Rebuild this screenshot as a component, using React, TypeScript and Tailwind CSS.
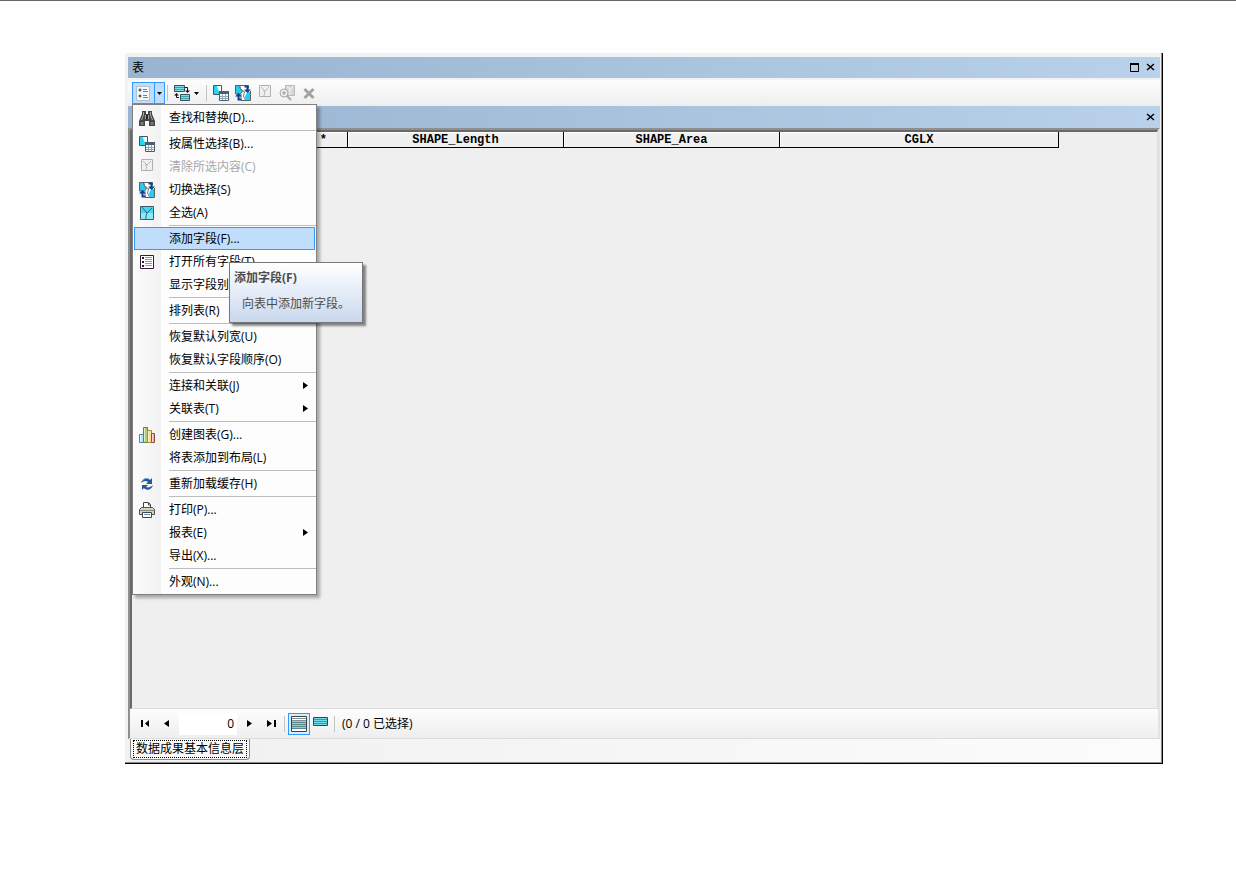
import { useState } from "react";
import type { ReactNode } from "react";

const Svg = ({ children }: { children: ReactNode }) => (
  <svg width="16" height="16" viewBox="0 0 16 16" fill="none" aria-hidden="true" className="block shrink-0">
    {children}
  </svg>
);

const OptionsIcon = () => (
  <Svg>
    <rect x=".5" y="1.5" width="13" height="14" fill="#f4f9ff" stroke="#b3bfcc" />
    <circle cx="4" cy="5" r="1" fill="#fff" stroke="#222" />
    <circle cx="4" cy="11" r="1" fill="#fff" stroke="#222" />
    <path d="M7 4.500h4M7 6.500h5M7 10.500h4M7 12.500h5" stroke="#7d7d7d" />
  </Svg>
);

const RelatedIcon = () => (
  <Svg>
    <path d="M0 0h11v7H0zM6 9h10v7H6z" fill="#86dbe8" />
    <path d="M1 2.500h9M1 4.500h9M7 11.500h8M7 13.500h8" stroke="#3f9db0" />
    <path d="M.5.5h10v6H.5zM6.500 9.500h9v6h-9z" stroke="#35525d" />
    <path d="M11 2.500h2.500V6M5 12.500H2.500V10" stroke="#111" />
    <path d="M11 5.500h5L13.500 8zM0 10.500h5L2.500 8z" fill="#111" />
  </Svg>
);

const SelectByAttrIcon = () => (
  <Svg>
    <path d="M.5.5h8v9h-8z" fill="#fff" stroke="#3e5865" />
    <path d="M1 1h4l1 4 2 2v2H1z" fill="#2bd3f3" />
    <path d="M4.500 1l1 4 3 3" stroke="#fff" />
    <path d="M6.500 6.500h9v9h-9z" fill="#fff" stroke="#4a5f6b" />
    <path d="M6 6h10v3H6z" fill="#4a5f6b" />
    <path d="M7 11.500h8M7 13.500h8M9.500 9v6M12.500 9v6" stroke="#8fa3ae" />
  </Svg>
);

const SwitchIcon = () => (
  <Svg>
    <path d="M.5.5h13v3M15.500 6v9.500H6" stroke="#54646d" />
    <path d="M1 1h12l-1 4 3 1v9H6V9L1 8z" fill="#fff" />
    <path d="M.5.5h4l1 3 2 3-2 2.500h-5z" fill="#27cdf1" stroke="#54646d" />
    <path d="M11 15l-1-3 1-3 2-2h2v8z" fill="#27cdf1" />
    <path d="M4.500 1l1 3 4 3 2-2M9.500 7l-1 4 2 4M6 9v6" stroke="#6a7a82" />
    <path d="M6.500 14.500h-3V10M9.500 1.500h3V5" stroke="#0d4487" strokeWidth="2" />
    <path d="M0 11.500L3.500 8 7 11.500zM9 4.500h7L12.500 8z" fill="#0d4487" />
  </Svg>
);

const ClearIcon = () => (
  <Svg>
    <path d="M2.500.5h11v11h-11z" fill="#f0f0f0" stroke="#b0b0b0" />
    <path d="M4 2l4 4 4-4M8 6l-1 5M8 6H6" stroke="#b9b9b9" />
  </Svg>
);

const SelectAllIcon = () => (
  <Svg>
    <path d="M1.500 1.500h13v13h-13z" fill="#48d5ef" stroke="#3c5b68" />
    <path d="M2 8h12v6H2z" fill="#8de9f7" />
    <path d="M3 2l4 5 1 1 5-5M8 8l-1 3v3" stroke="#3c6675" />
  </Svg>
);

const ZoomSelectedIcon = () => (
  <Svg>
    <path d="M6.500.5h9v10h-9z" fill="#d6d6d6" stroke="#bababa" />
    <path d="M8 1l3 4 3-4M11 5v5" stroke="#f5f5f5" />
    <circle cx="5" cy="8" r="4" fill="#eee" stroke="#a8a8a8" />
    <path d="M3 8h4M5 6v4" stroke="#999" />
    <path d="M8 11l4 4" stroke="#aaa" strokeWidth="2" />
  </Svg>
);

const DeleteIcon = () => (
  <Svg>
    <path d="M3.500 4l9 9M12.500 4l-9 9" stroke="#a3a3a3" strokeWidth="3" />
  </Svg>
);

const BinocularsIcon = () => (
  <Svg>
    <path d="M3 1h4v3h2V1h4v3l3 7v5h-6v-5H6v5H0v-5l3-7z" fill="#464646" />
    <path d="M4.500 2v3L2.500 10M11.500 2v3l2 5M6.500 5v4M9.500 5v4" stroke="#a5a5a5" />
    <path d="M1.500 12h3v3h-3zM11.500 12h3v3h-3z" fill="#777" />
    <path d="M7 5h2v4H7z" fill="#262626" />
  </Svg>
);

const FieldsIcon = () => (
  <Svg>
    <path d="M1.500 1.500h13v13h-13z" fill="#fff" stroke="#38183e" />
    <path d="M3 4h2M3 8h2M3 12h2" stroke="#222" strokeWidth="2" />
    <path d="M6 3.500h7M6 5.500h7M6 7.500h7M6 9.500h7M6 11.500h7" stroke="#9a9a9a" />
  </Svg>
);

const ChartIcon = () => (
  <Svg>
    <path d="M.5 7.500h4v8h-4z" fill="#bfe2f4" stroke="#4e86a5" />
    <path d="M4.500.5h4v15h-4z" fill="#b3cd7b" stroke="#667f36" />
    <path d="M8.500 3.500h4v12h-4z" fill="#fbdf94" stroke="#b28735" />
    <path d="M12.500 6.500h3v9h-3z" fill="#e8a58e" stroke="#964f3b" />
    <path d="M1.500 8v7M5.500 1v14M9.500 4v11M13.500 7v8" stroke="#fff" opacity=".6" />
  </Svg>
);

const ReloadIcon = () => (
  <Svg>
    <path d="M2 7c1-5 7-6 9-3l2-2v6H7l2-2C7 4 4 5 2 7z" fill="#1f5b99" />
    <path d="M14 9c-1 5-7 6-9 3l-2 2V9h6l-2 2c2 1 5 0 7-2z" fill="#1f5b99" />
    <path d="M3 5c2-3 5-3 7-2" stroke="#8db7de" />
  </Svg>
);

const PrinterIcon = () => (
  <Svg>
    <path d="M4.500 6V.5h5l2 2V6" fill="#fff" stroke="#444" />
    <path d="M9.500 1v2h2" stroke="#444" />
    <path d="M2.500 5.500h11l2 2v5H.5v-5z" fill="#d3d0bd" stroke="#55544c" />
    <path d="M1 8.500h14" stroke="#8b897e" />
    <path d="M3.500 10.500h9v5h-9z" fill="#fff" stroke="#444" />
    <path d="M5 12.500h6" stroke="#4d94c5" />
  </Svg>
);

const RowsIcon = () => (
  <Svg>
    <path d="M.5.5h15v15H.5z" fill="#fff" stroke="#38464c" />
    <path d="M1 5h14v8H1z" fill="#72dce8" />
    <path d="M1 2.500h14M1 4.500h14M1 6.500h14M1 8.500h14M1 10.500h14M1 12.500h14" stroke="#4b6269" opacity=".7" />
  </Svg>
);

const SelectedRowsIcon = () => (
  <Svg>
    <path d="M.5 1.500h14v8H.5z" fill="#72dce8" stroke="#38464c" />
    <path d="M1 3.500h13M1 5.500h13M1 7.500h13" stroke="#3f7480" opacity=".7" />
  </Svg>
);

const DownArrow = () => (
  <svg width="5" height="3" viewBox="0 0 5 3" aria-hidden="true" className="block shrink-0">
    <path d="M0 0h5L2.500 3z" fill="#000" />
  </svg>
);

const CloseIcon = () => (
  <svg width="9" height="9" viewBox="0 0 9 9" aria-hidden="true" className="block">
    <path d="M1 1l7 6M8 1L1 7" stroke="#000" strokeWidth="1.500" />
  </svg>
);

type MenuItem = {
  label: string;
  icon?: ReactNode;
  disabled?: boolean;
  submenu?: boolean;
};

const menuGroups: MenuItem[][] = [
  [{ label: "查找和替换(D)...", icon: <BinocularsIcon /> }],
  [
    { label: "按属性选择(B)...", icon: <SelectByAttrIcon /> },
    { label: "清除所选内容(C)", icon: <ClearIcon />, disabled: true },
    { label: "切换选择(S)", icon: <SwitchIcon /> },
    { label: "全选(A)", icon: <SelectAllIcon /> },
  ],
  [
    { label: "添加字段(F)..." },
    { label: "打开所有字段(T)", icon: <FieldsIcon /> },
    { label: "显示字段别名(W)" },
  ],
  [{ label: "排列表(R)" }],
  [{ label: "恢复默认列宽(U)" }, { label: "恢复默认字段顺序(O)" }],
  [
    { label: "连接和关联(J)", submenu: true },
    { label: "关联表(T)", submenu: true },
  ],
  [{ label: "创建图表(G)...", icon: <ChartIcon /> }, { label: "将表添加到布局(L)" }],
  [{ label: "重新加载缓存(H)", icon: <ReloadIcon /> }],
  [
    { label: "打印(P)...", icon: <PrinterIcon /> },
    { label: "报表(E)", submenu: true },
    { label: "导出(X)..." },
  ],
  [{ label: "外观(N)..." }],
];

const columns = [
  { name: "*", className: "w-[216px] pr-5 text-right" },
  { name: "SHAPE_Length", className: "w-[216px] text-center" },
  { name: "SHAPE_Area", className: "w-[216px] text-center" },
  { name: "CGLX", className: "w-[279px] text-center" },
];

function OptionsMenu() {
  const [active, setActive] = useState("添加字段(F)...");

  return (
    <div
      role="menu"
      className="w-[185px] border border-[#808080] bg-[linear-gradient(to_right,#fcfcfc_0,#f1f1f1_28px,#fdfdfd_28px)] py-px shadow-[3px_3px_3px_rgba(0,0,0,0.3)]"
    >
      {menuGroups.map((group, i) => (
        <div key={i} role="group">
          {i > 0 && (
            <div className="h-[3px] pl-9 pt-px">
              <div className="h-px bg-[#bdbdbd]" />
            </div>
          )}
          {group.map((item) => (
            <div key={item.label} className="relative">
              <button
                type="button"
                role="menuitem"
                disabled={item.disabled}
                onMouseEnter={() => setActive(item.label)}
                className={`mx-px flex h-[23px] w-[181px] items-center border pl-1 pr-1.5 text-left whitespace-nowrap ${
                  active === item.label ? "border-[#3399ff] bg-[#c0ddfb]" : "border-transparent"
                } ${item.disabled ? "text-[#a8a8a8]" : "text-black"}`}
              >
                <span className="w-[30px] shrink-0">{item.icon}</span>
                <span className="flex-1">{item.label}</span>
                {item.submenu && (
                  <svg width="5" height="7" viewBox="0 0 5 7" aria-hidden="true">
                    <path d="M0 0l5 3.500L0 7z" fill="#000" />
                  </svg>
                )}
              </button>
              {item.label === "添加字段(F)..." && active === item.label && (
                <div
                  role="tooltip"
                  className="absolute left-24 top-[35px] z-20 h-[61px] w-[134px] border border-[#767676] bg-linear-to-b from-white to-[#c9d8ee] px-1 pt-1.5 text-[#4c4c4c] shadow-[3px_3px_2px_rgba(0,0,0,0.45)]"
                >
                  <p className="font-bold leading-[18px]">添加字段(F)</p>
                  <p className="mt-2 whitespace-nowrap pl-2 leading-[18px]">向表中添加新字段。</p>
                </div>
              )}
            </div>
          ))}
        </div>
      ))}
    </div>
  );
}

function Toolbar() {
  return (
    <div className="mt-0.5 flex h-[26px] items-center bg-linear-to-b from-[#fdfdfd] to-[#eeeeee] pl-1">
      <div className="relative flex h-[22px] border border-[#3399ff] bg-[#c0ddfb]">
        <button type="button" aria-label="表选项" className="flex w-[21px] items-center justify-center">
          <OptionsIcon />
        </button>
        <button type="button" aria-label="打开表选项" className="flex w-[10px] items-center justify-center border-l border-[#3399ff]">
          <DownArrow />
        </button>
        <div className="absolute -left-px top-full z-10 pt-px">
          <OptionsMenu />
        </div>
      </div>
      <span className="ml-0.5 h-4 w-px bg-[#c3c3c3]" />
      <button type="button" aria-label="关联表" className="ml-1.5 flex items-center gap-1">
        <RelatedIcon />
        <DownArrow />
      </button>
      <span className="ml-[7px] h-4 w-px bg-[#c3c3c3]" />
      <div className="ml-1.5 flex items-center gap-1.5">
        <button type="button" aria-label="按属性选择"><SelectByAttrIcon /></button>
        <button type="button" aria-label="切换选择"><SwitchIcon /></button>
        <button type="button" aria-label="清除所选内容" disabled><ClearIcon /></button>
        <button type="button" aria-label="缩放至所选" disabled><ZoomSelectedIcon /></button>
        <button type="button" aria-label="删除所选" disabled><DeleteIcon /></button>
      </div>
    </div>
  );
}

function RecordBar() {
  const [record, setRecord] = useState("0");

  return (
    <div className="flex h-[29px] items-center bg-linear-to-b from-[#fdfdfd] to-[#eeeeee] pl-[11px]">
      <button type="button" aria-label="第一条" className="w-[10px]">
        <svg width="9" height="7" viewBox="0 0 9 7"><path d="M0 0h2v7H0zM8 0v7L4 3.500z" fill="#000" /></svg>
      </button>
      <button type="button" aria-label="上一条" className="ml-[13px] w-[15px]">
        <svg width="5" height="7" viewBox="0 0 5 7"><path d="M5 0v7L0 3.500z" fill="#000" /></svg>
      </button>
      <input
        aria-label="当前记录"
        value={record}
        onChange={(e) => setRecord(e.target.value)}
        className="h-[22px] w-[58px] bg-white pr-[3px] text-right outline-none"
      />
      <button type="button" aria-label="下一条" className="ml-2.5 w-[5px]">
        <svg width="5" height="7" viewBox="0 0 5 7"><path d="M0 0v7l5-3.500z" fill="#000" /></svg>
      </button>
      <button type="button" aria-label="最后一条" className="ml-[15px] w-[9px]">
        <svg width="9" height="7" viewBox="0 0 9 7"><path d="M7 0h2v7H7zM0 0v7l5-3.500z" fill="#000" /></svg>
      </button>
      <span className="ml-2 h-4 w-px bg-[#c3c3c3]" />
      <button
        type="button"
        aria-label="显示所有记录"
        className="ml-[3px] flex h-[22px] w-[22px] items-center justify-center border border-[#3399ff] bg-[#dcebfb]"
      >
        <RowsIcon />
      </button>
      <button type="button" aria-label="显示所选记录" className="ml-[3px]">
        <SelectedRowsIcon />
      </button>
      <span className="ml-[5px] h-4 w-px bg-[#c3c3c3]" />
      <span className="ml-[7px]">(0 / 0 已选择)</span>
    </div>
  );
}

export default function App() {
  return (
    <div className="min-h-screen border-t border-[#666] bg-[#fdfefd] pb-28 pl-[125px] pr-[73px] pt-[52px] font-['Open_Sans','Noto_Sans_CJK_SC',sans-serif] text-xs text-black">
      <div className="border-b border-r border-black">
        <div className="border-b border-r border-[#8a8a8a] bg-[#f2f2f2] pl-[3px] pr-px pt-1">
          <header className="flex h-[21px] items-center justify-between bg-linear-to-r from-[#99b4d1] to-[#b9d1ea] pl-1 pr-[5px]">
            <h1>表</h1>
            <div className="flex items-center gap-[7px]">
              <button type="button" aria-label="最大化">
                <svg width="9" height="9" viewBox="0 0 9 9" className="block">
                  <path d="M.5.5h8v8h-8z" fill="none" stroke="#000" />
                  <path d="M0 0h9v2H0z" fill="#000" />
                </svg>
              </button>
              <button type="button" aria-label="关闭"><CloseIcon /></button>
            </div>
          </header>

          <Toolbar />

          <div className="flex h-[22px] items-center justify-end bg-linear-to-r from-[#99b4d1] to-[#b9d1ea] pr-[5px]">
            <button type="button" aria-label="关闭表"><CloseIcon /></button>
          </div>

          <main className="border-2 border-b border-[#8f8f8f] border-b-[#dcdcdc] border-r-[#e3e3e3]">
            <div className="min-h-[579px] border-2 border-b border-r border-[#696969] border-b-[#dcdcdc] border-r-[#dcdcdc] bg-[#efefef]">
              <table className="table-fixed border-separate border-spacing-0 font-['Liberation_Mono','Noto_Sans_CJK_SC',monospace]">
                <thead>
                  <tr>
                    {columns.map((col) => (
                      <th
                        key={col.name}
                        scope="col"
                        className={`border-b border-r border-black bg-[#f0f0f0] p-0 pt-px font-bold leading-[14px] shadow-[inset_1px_1px_0_#ffffff] ${col.className}`}
                      >
                        {col.name}
                      </th>
                    ))}
                  </tr>
                </thead>
              </table>
            </div>
            <RecordBar />
          </main>

          <footer className="flex h-[23px] items-start bg-linear-to-r from-[#f0f0f0] to-[#fcfcfc] pl-0.5">
            <button
              type="button"
              className="rounded-b-sm border border-t-0 border-[#8c8c8c] bg-[#fafafa] px-0.5 pb-px pt-px"
            >
              <span className="block border border-dotted border-black px-0.5 leading-4">数据成果基本信息层</span>
            </button>
          </footer>
        </div>
      </div>
    </div>
  );
}
